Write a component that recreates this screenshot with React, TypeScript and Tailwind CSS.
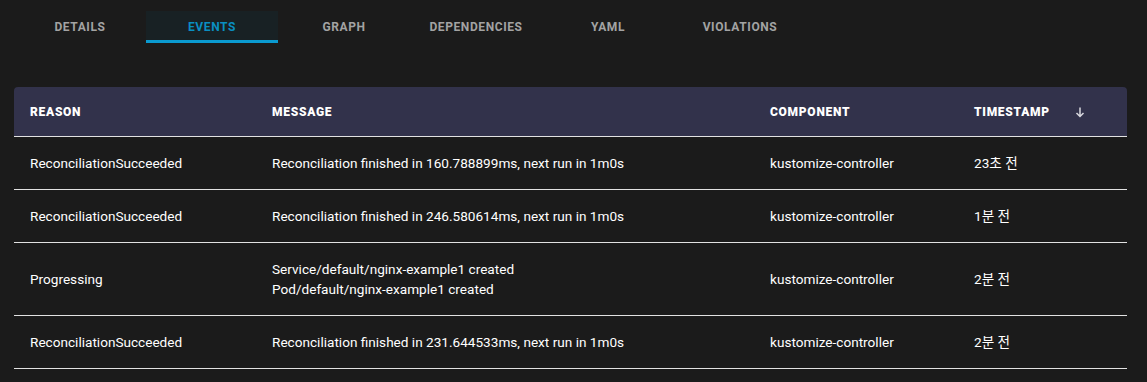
import React from "react";

const tabs = ["DETAILS", "EVENTS", "GRAPH", "DEPENDENCIES", "YAML", "VIOLATIONS"];

const rows: { reason: string; message: string[]; component: string; ts: string }[] = [
  { reason: "ReconciliationSucceeded", message: ["Reconciliation finished in 160.788899ms, next run in 1m0s"], component: "kustomize-controller", ts: "23초 전" },
  { reason: "ReconciliationSucceeded", message: ["Reconciliation finished in 246.580614ms, next run in 1m0s"], component: "kustomize-controller", ts: "1분 전" },
  { reason: "Progressing", message: ["Service/default/nginx-example1 created", "Pod/default/nginx-example1 created"], component: "kustomize-controller", ts: "2분 전" },
  { reason: "ReconciliationSucceeded", message: ["Reconciliation finished in 231.644533ms, next run in 1m0s"], component: "kustomize-controller", ts: "2분 전" },
];

export default function App() {
  return (
    <div
      className="w-[1147px] h-[382px] bg-[#1b1b1b] text-white overflow-hidden"
      style={{ fontFamily: '"Roboto", "Noto Sans CJK KR", sans-serif' }}
    >
      <div className="flex pl-[14px] pt-[11px]">
        {tabs.map((t) => {
          const active = t === "EVENTS";
          return (
            <div
              key={t}
              className={
                "w-[132px] h-[32px] pt-[3px] flex items-center justify-center text-[12px] font-bold tracking-[0.05em] border-b-[3px] " +
                (active
                  ? "bg-[#182124] text-[#0a8fc2] border-[#0a9ad0]"
                  : "text-[#a3a3a3] border-transparent")
              }
            >
              {t}
            </div>
          );
        })}
      </div>

      <div className="ml-[14px] mr-[20px] mt-[44px]">
        <div className="grid grid-cols-[242px_498px_204px_1fr] h-[50px] pt-[1px] items-center bg-[#32324b] rounded-t-[4px] border-b border-[#e2e2e2] text-[12px] font-black tracking-[0.06em] text-white">
          <div className="pl-[16px]">REASON</div>
          <div className="pl-[16px]">MESSAGE</div>
          <div className="pl-[16px]">COMPONENT</div>
          <div className="pl-[16px] flex items-center">
            <span>TIMESTAMP</span>
            <svg className="ml-[24px]" width="12" height="12" viewBox="0 0 12 12" fill="none" stroke="#d8d8de" strokeWidth="1.5">
              <path d="M6 1.5v9M2.5 7l3.5 3.5L9.5 7" />
            </svg>
          </div>
        </div>
        {rows.map((r, i) => (
          <div
            key={i}
            className={
              "grid grid-cols-[242px_498px_204px_1fr] items-center border-b border-[#e2e2e2] text-[13.6px] font-normal text-white " +
              (r.message.length > 1 ? "h-[73px]" : "h-[53px]")
            }
          >
            <div className="pl-[16px]">{r.reason}</div>
            <div className="pl-[16px] leading-[20px]">
              {r.message.map((m, j) => (
                <div key={j}>{m}</div>
              ))}
            </div>
            <div className="pl-[16px]">{r.component}</div>
            <div className="pl-[16px]">{r.ts}</div>
          </div>
        ))}
      </div>
    </div>
  );
}
